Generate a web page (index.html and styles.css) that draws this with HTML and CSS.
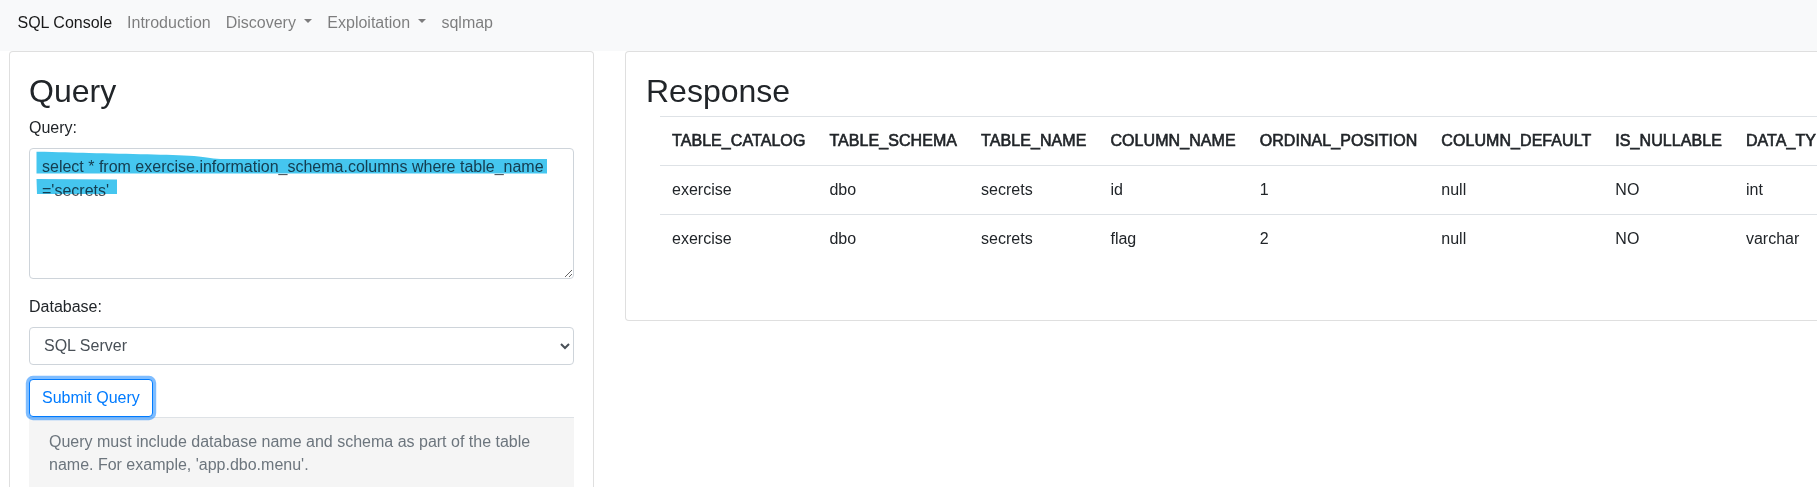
FILE: index.html
```html
<!DOCTYPE html>
<html lang="en">
<head>
<meta charset="utf-8">
<title>SQL Console</title>
<link rel="stylesheet" href="styles.css">
</head>
<body>
<nav class="navbar">
  <a class="nav-link active" href="#">SQL Console</a>
  <a class="nav-link" href="#">Introduction</a>
  <a class="nav-link dropdown-toggle" href="#">Discovery</a>
  <a class="nav-link dropdown-toggle" href="#">Exploitation</a>
  <a class="nav-link" href="#">sqlmap</a>
</nav>
<main class="main">
  <section class="card card-query">
    <h2 class="card-title">Query</h2>
    <div class="form-group">
      <label class="form-label" for="q">Query:</label>
      <div class="textarea-wrap">
        <textarea id="q" class="form-control query-input">select * from exercise.information_schema.columns where table_name ='secrets'</textarea>
        <svg class="marker" width="545" height="131" viewBox="0 0 545 131" aria-hidden="true">
          <path d="M7.5 3.7 C30 4 44 4.5 60 5 C100 6 140 6.5 165 8 C178 9.5 185 11 195 11 L518 11 L518 25.5 L7.5 25.5 Z" fill="#45c6ef"/>
          <path d="M7.5 31 L88 31.5 L88 46 L8 46 Z" fill="#45c6ef"/>
        </svg>
      </div>
    </div>
    <div class="form-group form-group-db">
      <label class="form-label" for="db">Database:</label>
      <select id="db" class="form-control form-select">
        <option>SQL Server</option>
      </select>
    </div>
    <button class="btn btn-outline-primary" type="button">Submit Query</button>
    <div class="hint">Query must include database name and schema as part of the table name. For example, 'app.dbo.menu'.</div>
  </section>
  <section class="card card-response">
    <h2 class="card-title">Response</h2>
    <table class="table">
      <thead>
        <tr>
          <th>TABLE_CATALOG</th><th>TABLE_SCHEMA</th><th>TABLE_NAME</th><th>COLUMN_NAME</th><th>ORDINAL_POSITION</th><th>COLUMN_DEFAULT</th><th>IS_NULLABLE</th><th>DATA_TYPE</th><th>CHARACTER_MAXIMUM_LENGTH</th>
        </tr>
      </thead>
      <tbody>
        <tr>
          <td>exercise</td><td>dbo</td><td>secrets</td><td>id</td><td>1</td><td>null</td><td>NO</td><td>int</td><td>null</td>
        </tr>
        <tr>
          <td>exercise</td><td>dbo</td><td>secrets</td><td>flag</td><td>2</td><td>null</td><td>NO</td><td>varchar</td><td>50</td>
        </tr>
      </tbody>
    </table>
  </section>
</main>
</body>
</html>
```

FILE: styles.css
```css
* {
  box-sizing: border-box;
}

html,
body {
  margin: 0;
  overflow: hidden;
}

body {
  width: 1817px;
  height: 487px;
  font-family: "Liberation Sans", Arial, sans-serif;
  font-size: 16px;
  line-height: 1.5;
  color: #212529;
  background: #fff;
}

/* navbar */
.navbar {
  display: flex;
  align-items: center;
  background: #f8f9fa;
  padding: 2.5px 0 8px 10px;
}

.nav-link {
  padding: 8px 7.5px;
  color: rgba(0, 0, 0, 0.5);
  text-decoration: none;
}

.nav-link.active {
  color: rgba(0, 0, 0, 0.9);
}

.dropdown-toggle::after {
  content: "";
  display: inline-block;
  margin-left: 8.4px;
  vertical-align: 0.255em;
  border-top: 0.3em solid;
  border-right: 0.3em solid transparent;
  border-left: 0.3em solid transparent;
  border-bottom: 0;
}

/* layout */
.main {
  display: flex;
  align-items: flex-start;
  gap: 31px;
  padding-left: 9px;
}

.card {
  flex: none;
  background: #fff;
  border: 1px solid rgba(0, 0, 0, 0.125);
  border-radius: 4px;
  padding: 20px;
}

.card-query {
  width: 585px;
  height: 520px;
  padding: 20px 19px;
}

.card-title {
  margin: 0 0 6px;
  font-size: 32px;
  font-weight: 500;
  line-height: 1.2;
}

/* form */
.form-group {
  margin-bottom: 16px;
}

.form-group-db {
  margin-bottom: 14.5px;
}

.form-label {
  display: inline-block;
  margin-bottom: 8px;
}

.form-control {
  display: block;
  width: 100%;
  font-family: inherit;
  font-size: 16px;
  line-height: 1.5;
  color: #495057;
  background: #fff;
  border: 1px solid #ced4da;
  border-radius: 4px;
  padding: 6px 12px;
}

.textarea-wrap {
  position: relative;
}

.query-input {
  height: 131px;
  resize: vertical;
  margin: 0;
}

.marker {
  position: absolute;
  left: 0;
  top: 0;
  pointer-events: none;
  mix-blend-mode: multiply;
}

.form-select {
  height: 38px;
  padding: 6px 8px 6px 10px;
}

.btn {
  display: inline-block;
  font-family: inherit;
  font-size: 16px;
  line-height: 1.5;
  padding: 6px 12px;
  border-radius: 4px;
  background: #fff;
  cursor: pointer;
}

.btn-outline-primary {
  color: #007bff;
  border: 1px solid #007bff;
  box-shadow: 0 0 0 3.2px rgba(0, 123, 255, 0.5);
}

.hint {
  background: #f5f5f5;
  border-top: 1px solid #dee2e6;
  color: #6c757d;
  padding: 13px 20px 12px;
  line-height: 1.4;
  height: 120px;
}

/* table */
.table {
  border-collapse: collapse;
  margin: 0 0 37px 14px;
  color: #212529;
}

.table th,
.table td {
  padding: 12px;
  border-top: 1px solid #dee2e6;
  text-align: left;
  vertical-align: top;
  white-space: nowrap;
}

.table th {
  font-weight: 400;
  letter-spacing: 0.07px;
  -webkit-text-stroke: 0.62px #212529;
}
```
